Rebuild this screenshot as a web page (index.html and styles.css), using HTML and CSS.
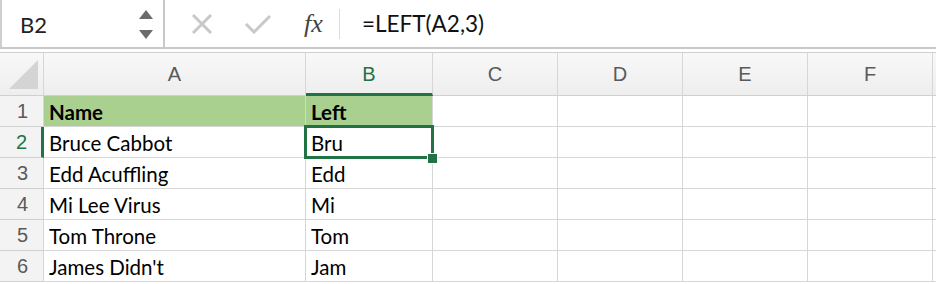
FILE: index.html
```html
<!DOCTYPE html>
<html lang="en">
<head>
    <meta charset="UTF-8">
    <title>LEFT function</title>
    <link rel="stylesheet" href="styles.css">
</head>
<body>
    <div class="formula-bar">
        <div class="name-box">
            <span class="cell-ref">B2</span>
            <span class="spinner">
                <svg width="14" height="30" viewBox="0 0 14 30"><path d="M7 0 L14 9 L0 9 Z" fill="#6b6b6b"/><path d="M0 20 L14 20 L7 29 Z" fill="#6b6b6b"/></svg>
            </span>
        </div>
        <div class="bar-icons">
            <svg class="icon" width="22" height="20" viewBox="0 0 22 20"><path d="M2 1 L20 19 M20 1 L2 19" stroke="#c9c9c9" stroke-width="3" fill="none"/></svg>
            <svg class="icon check" width="28" height="20" viewBox="0 0 28 20"><path d="M2 10 L10 18 L26 2" stroke="#c9c9c9" stroke-width="3" fill="none"/></svg>
            <span class="fx">fx</span>
        </div>
        <div class="formula">=LEFT(A2,3)</div>
    </div>
    <div class="spacer"></div>

    <div class="sheet">
        <div class="hdr corner"><span class="tri"></span></div>
        <div class="hdr col">A</div>
        <div class="hdr col active">B</div>
        <div class="hdr col">C</div>
        <div class="hdr col">D</div>
        <div class="hdr col">E</div>
        <div class="hdr col">F</div>
        <div class="hdr col last"></div>

        <div class="hdr row">1</div>
        <div class="cell head">Name</div>
        <div class="cell head">Left</div>
        <div class="cell"></div><div class="cell"></div><div class="cell"></div><div class="cell"></div><div class="cell last"></div>

        <div class="hdr row active">2</div>
        <div class="cell">Bruce Cabbot</div>
        <div class="cell selected">Bru<span class="sel-box"></span><span class="handle"></span></div>
        <div class="cell"></div><div class="cell"></div><div class="cell"></div><div class="cell"></div><div class="cell last"></div>

        <div class="hdr row">3</div>
        <div class="cell">Edd Acuffling</div>
        <div class="cell">Edd</div>
        <div class="cell"></div><div class="cell"></div><div class="cell"></div><div class="cell"></div><div class="cell last"></div>

        <div class="hdr row">4</div>
        <div class="cell">Mi Lee Virus</div>
        <div class="cell">Mi</div>
        <div class="cell"></div><div class="cell"></div><div class="cell"></div><div class="cell"></div><div class="cell last"></div>

        <div class="hdr row">5</div>
        <div class="cell">Tom Throne</div>
        <div class="cell">Tom</div>
        <div class="cell"></div><div class="cell"></div><div class="cell"></div><div class="cell"></div><div class="cell last"></div>

        <div class="hdr row">6</div>
        <div class="cell">James Didn't</div>
        <div class="cell">Jam</div>
        <div class="cell"></div><div class="cell"></div><div class="cell"></div><div class="cell"></div><div class="cell last"></div>
    </div>
</body>
</html>
```

FILE: styles.css
```css
* {
    box-sizing: border-box;
}
body {
    margin: 0;
    background: #fff;
    font-family: Lato, "Open Sans", sans-serif;
    overflow: hidden;
}
.formula-bar {
    display: flex;
    height: 49px;
    border-bottom: 2px solid #c8c8c8;
}
.name-box {
    width: 165px;
    display: flex;
    align-items: center;
    justify-content: space-between;
    border-left: 2px solid #cfcfcf;
    border-right: 2px solid #c8c8c8;
    padding: 0 10px 0 18px;
}
.cell-ref {
    font-size: 22px;
    color: #222;
    padding-top: 1px;
}
.spinner svg {
    display: block;
    margin-top: 2px;
}
.bar-icons {
    display: flex;
    align-items: center;
    padding-left: 26px;
    width: 184px;
}
.icon {
    display: block;
}
.check {
    margin-left: 31px;
}
.fx {
    font-family: "Liberation Serif", serif;
    font-style: italic;
    font-size: 26px;
    color: #444;
    margin-left: 32px;
    padding-right: 16px;
    border-right: 1px solid #dcdcdc;
    line-height: 30px;
}
.formula {
    display: flex;
    align-items: center;
    padding-left: 13px;
    font-size: 22.5px;
    color: #111;
}
.spacer {
    height: 4px;
    border-bottom: 1px solid #d0d0d0;
}
.sheet {
    display: grid;
    grid-template-columns: 44px 262px 127px 125px 125px 125px 125px 3px;
    grid-template-rows: 43px repeat(6, 31px);
}
.hdr {
    background: linear-gradient(#f8f8f8, #eeeeee);
    border-right: 1px solid #d6d6d6;
    border-bottom: 1px solid #d0d0d0;
    color: #5a5a5a;
    font-family: "Liberation Sans", Arial, sans-serif;
    font-size: 20px;
    display: flex;
    align-items: center;
    justify-content: center;
}
.hdr.col.active {
    color: #217346;
    border-bottom: 3px solid #217346;
    padding-top: 2px;
}
.hdr.row {
    background: #f3f3f3;
    padding-left: 2px;
}
.hdr.row.active {
    color: #217346;
    border-right: 3px solid #217346;
}
.hdr.last {
    border-right: none;
}
.corner {
    align-items: flex-end;
    justify-content: flex-end;
    padding: 0 5px 6px 0;
}
.tri {
    width: 0;
    height: 0;
    border-left: 29px solid transparent;
    border-bottom: 29px solid #d4d4d4;
}
.cell {
    border-right: 1px solid #d6d6d6;
    border-bottom: 1px solid #d6d6d6;
    font-size: 20.5px;
    color: #000;
    display: flex;
    align-items: center;
    padding: 2px 0 0 5px;
    white-space: nowrap;
}
.cell.last {
    border-right: none;
}
.cell.head {
    background: #a9d08e;
    font-weight: bold;
}
.selected {
    position: relative;
}
.sel-box {
    position: absolute;
    left: -2px;
    top: -2px;
    right: -2px;
    bottom: -2px;
    border: 3px solid #217346;
}
.handle {
    position: absolute;
    right: -6px;
    bottom: -7px;
    width: 11px;
    height: 11px;
    background: #217346;
    border: 1px solid #fff;
}
```
